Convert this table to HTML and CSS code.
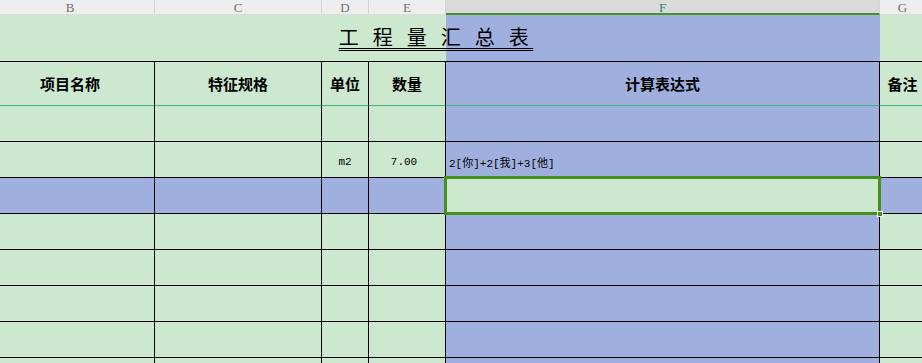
FILE: index.html
```html
<!DOCTYPE html>
<html lang="zh-CN">
<head>
<meta charset="utf-8">
<title>工程量汇总表</title>
<link rel="stylesheet" href="styles.css">
</head>
<body>
<div class="sheet">
  <!-- column letters -->
  <div class="ch">B</div>
  <div class="ch">C</div>
  <div class="ch">D</div>
  <div class="ch">E</div>
  <div class="ch ch-on">F</div>
  <div class="ch">G</div>

  <!-- title row (B:F merged) -->
  <div class="trow">
    <div class="t"></div>
    <div class="t blue"></div>
    <div class="t"></div>
    <div class="title"><span>工 程 量 汇 总 表</span></div>
  </div>

  <!-- field names -->
  <div class="c h">项目名称</div>
  <div class="c h">特征规格</div>
  <div class="c h">单位</div>
  <div class="c h">数量</div>
  <div class="c h blue">计算表达式</div>
  <div class="c h">备注</div>

  <div class="c"></div><div class="c"></div><div class="c"></div><div class="c"></div><div class="c blue"></div><div class="c"></div>

  <div class="c"></div>
  <div class="c"></div>
  <div class="c num">m2</div>
  <div class="c num qty">7.00</div>
  <div class="c blue expr">2[你]+2[我]+3[他]</div>
  <div class="c"></div>

  <div class="c blue"></div><div class="c blue"></div><div class="c blue"></div><div class="c blue"></div>
  <div class="c active"><span class="cursor"></span><span class="handle"></span></div>
  <div class="c blue"></div>

  <div class="c"></div><div class="c"></div><div class="c"></div><div class="c"></div><div class="c blue"></div><div class="c"></div>
  <div class="c"></div><div class="c"></div><div class="c"></div><div class="c"></div><div class="c blue"></div><div class="c"></div>
  <div class="c"></div><div class="c"></div><div class="c"></div><div class="c"></div><div class="c blue"></div><div class="c"></div>
  <div class="c"></div><div class="c"></div><div class="c"></div><div class="c"></div><div class="c blue"></div><div class="c"></div>
  <div class="c"></div><div class="c"></div><div class="c"></div><div class="c"></div><div class="c blue"></div><div class="c"></div>
</div>
</body>
</html>
```

FILE: styles.css
```css
html, body {
  margin: 0;
  padding: 0;
  overflow: hidden;
  background: #cce8cf;
}

.sheet {
  display: grid;
  grid-template-columns: 169px 167px 47px 77px 434px 46px;
  grid-template-rows: 15px 47px 44px repeat(8, 36px);
  margin-left: -14px;
  width: 940px;
  font-family: "Noto Sans CJK SC", sans-serif;
}

/* column letters */
.ch {
  box-sizing: border-box;
  background: #eeeeee;
  border-right: 1px solid #d6d6d6;
  border-bottom: 1px solid #dcdcdc;
  display: flex;
  align-items: center;
  justify-content: center;
  font-family: "Liberation Serif", serif;
  font-size: 13px;
  line-height: 1;
  color: #707070;
  padding-top: 1px;
}

.ch-on {
  background: #dadada;
  border-bottom: 2px solid #4b9128;
  color: #178a6c;
}

/* title row: B:E merged area, F highlighted, G plain */
.trow {
  grid-column: 1 / -1;
  display: grid;
  grid-template-columns: 460px 434px 46px;
  grid-template-rows: 47px;
}

.t {
  grid-row: 1;
  box-sizing: border-box;
  background: #cce8cf;
  border-bottom: 1px solid #000;
}

.t:nth-child(1) { grid-column: 1; }
.t:nth-child(2) { grid-column: 2; }
.t:nth-child(3) { grid-column: 3; }

.trow .blue {
  background: #a0b0de;
}

.title {
  grid-row: 1;
  grid-column: 1 / 3;
  display: flex;
  align-items: center;
  justify-content: center;
  padding-bottom: 2px;
  padding-left: 6px;
}

.title span {
  font-family: "Liberation Serif", "Noto Sans CJK SC", serif;
  font-size: 20px;
  line-height: 1;
  letter-spacing: 4.5px;
  color: #000;
  text-decoration: underline double;
  text-underline-offset: 3px;
  text-decoration-thickness: 1px;
}

/* body cells */
.c {
  box-sizing: border-box;
  background: #cce8cf;
  border-right: 1px solid #000;
  border-bottom: 1px solid #000;
  display: flex;
  align-items: center;
  justify-content: center;
  color: #000;
}

.blue {
  background: #a0b0de;
}

.h {
  font-size: 15px;
  font-weight: 700;
  border-bottom-color: #3db37f;
}

.num {
  font-family: "Liberation Mono", "Noto Sans CJK SC", monospace;
  font-size: 11px;
  padding-top: 4px;
}

.qty {
  padding-right: 6px;
}

.expr {
  justify-content: flex-start;
  padding-left: 3px;
  padding-top: 4px;
  font-family: "Liberation Mono", "Noto Sans CJK SC", monospace;
  font-size: 11px;
}

/* active cell with selection frame */
.active {
  position: relative;
  background: #cce8cf;
}

.cursor {
  position: absolute;
  left: -2px;
  top: -2px;
  right: -2px;
  bottom: -2px;
  border: 3px solid #45901f;
}

.handle {
  position: absolute;
  right: -4px;
  bottom: -4px;
  width: 4px;
  height: 4px;
  background: #45901f;
  border: 1px solid #fff;
}
```
